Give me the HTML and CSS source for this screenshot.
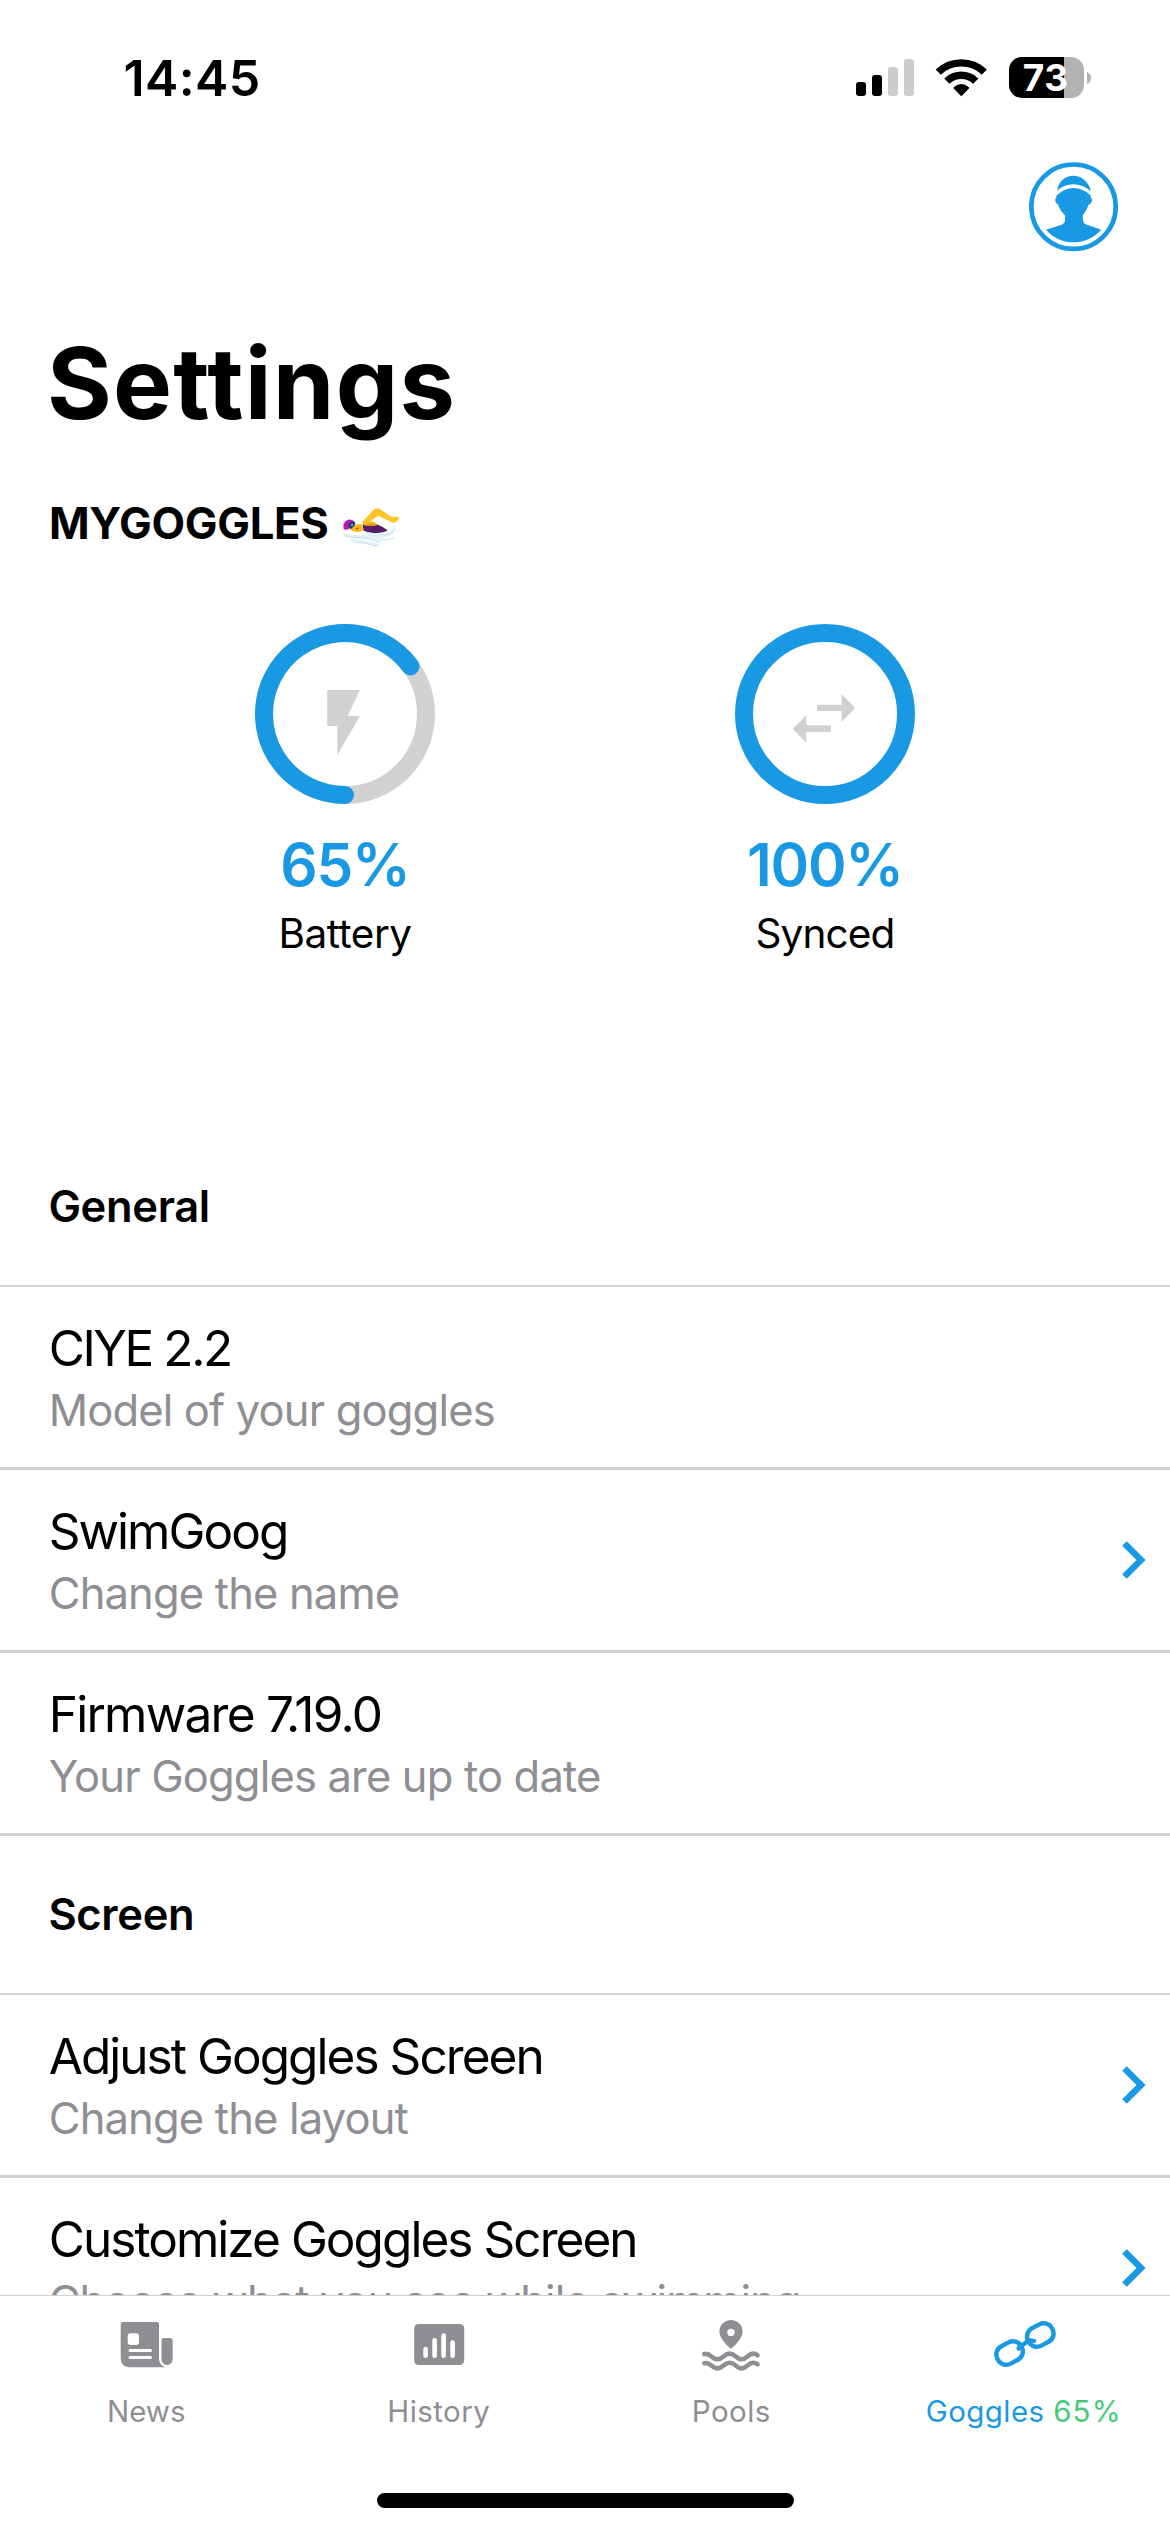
FILE: index.html
```html
<!DOCTYPE html>
<html lang="en">
<head>
<meta charset="utf-8">
<title>Settings</title>
<link rel="stylesheet" href="styles.css">
</head>
<body>
<header class="status-bar">
  <time class="clock">14:45</time>
  <div class="indicators">
    <svg class="signal" width="58" height="41" viewBox="0 0 58 41">
      <rect x="0" y="25" width="10" height="14" rx="3"/>
      <rect x="16" y="18" width="10" height="21" rx="3"/>
      <rect class="off" x="32" y="10" width="10" height="29" rx="3"/>
      <rect class="off" x="48" y="2" width="10" height="37" rx="3"/>
    </svg>
    <svg class="wifi" width="52" height="41" viewBox="0 0 52 41">
      <path class="arc" d="M3.3 15.1A33.4 33.4 0 0 1 49.3 15.1"/>
      <path class="arc" d="M11.8 24.1A21 21 0 0 1 40.8 24.1"/>
      <path d="M26.3 39.3L18.6 31.6Q18.2 30.6 19 30Q26.3 24.2 33.6 30Q34.4 30.6 34 31.6Z"/>
    </svg>
    <div class="battery"><span class="battery-level">73</span></div>
    <svg class="battery-nub" width="4" height="12" viewBox="0 0 4 12"><path d="M0 0Q4 2 4 6T0 12Z"/></svg>
  </div>
</header>

<nav class="top-bar">
  <svg class="avatar" width="90" height="90" viewBox="0 0 90 90">
    <circle class="avatar-ring" cx="44.5" cy="44.7" r="42.2"/>
    <path d="M28 28.7C30 18.5 36.5 13.7 44.4 13.7S59.5 19 62 29.3Q53.5 22.4 44.4 22.3Q35.5 22.3 28 28.7Z"/>
    <path d="M44.4 26Q35 26.2 27.3 33.7V36C25.5 36.5 26 41.3 29 42.2C30.5 47 33.5 51 36 53.4V58.7Q35.8 61.5 32.7 62.7L17 67.7C24 75.8 33.5 80.3 44.4 80.3S65 75.8 72.3 67.7L56.5 62.3Q54 61 53.8 57V53C56 50.5 58 47 59.5 42.8C63.5 41.5 63.8 37 61.8 35.5L61.5 33.3Q54 26.2 44.4 26Z"/>
  </svg>
</nav>

<main class="content">
  <h1 class="page-title">Settings</h1>
  <div class="device-name">
    <h2 class="device-label">MYGOGGLES</h2>
    <svg class="swimmer" width="60" height="50" viewBox="33 45 180 150">
      <g fill="none" stroke-linecap="round">
        <path stroke="#e4f2f8" stroke-width="9" d="M45 133C75 148 105 130 145 150M65 150C95 158 115 155 142 166M110 130C150 150 175 140 194 118"/>
        <path stroke="#c3e1ee" stroke-width="3" d="M46 138C80 150 105 135 150 158M80 156C105 158 125 164 140 169M125 128C155 140 180 135 190 124M150 148C165 152 180 150 192 143"/>
      </g>
      <path fill="#571b6b" d="M98 103L138 101Q155 108 173 121Q158 131 132 129Q110 127 99 121Z"/>
      <path fill="#f9b51c" d="M64 106L92 101L102 118Q92 128 79 126Q65 124 60 117Z"/>
      <path fill="#ffc229" d="M97 96L127 63Q138 50 151 58L184 81L200 80Q209 80 206 87Q201 97 191 99L145 77L122 92Q137 95 143 104Q124 111 102 106Z"/>
      <path fill="#e59a10" d="M101 105Q123 111 143 104Q130 99 121 99Q109 102 101 105Z"/>
      <path fill="#bd14b5" d="M41 117Q37 98 52 90Q66 85 74 97L56 117Q47 121 41 117Z"/>
      <path fill="#1d3e69" d="M57 100L73 94L76 101L72 109L61 118L55 109Z"/>
      <circle cx="66" cy="105" r="4" fill="#36a8df"/>
      <path fill="#7a3d0a" d="M79 114h6v3h-6z"/>
    </svg>
  </div>

  <section class="gauges">
    <div class="gauge">
      <svg class="ring" width="180" height="180" viewBox="0 0 180 180">
        <circle class="track" cx="90" cy="90" r="81"/>
        <path class="value" d="M90 171A81 81 0 1 1 155.5 42.4"/>
        <path class="glyph" d="M72.3 66H105L92.7 92H105L82.3 131V102H72.3Z"/>
      </svg>
      <strong class="gauge-value">65%</strong>
      <span class="gauge-label">Battery</span>
    </div>
    <div class="gauge">
      <svg class="ring" width="180" height="180" viewBox="0 0 180 180">
        <circle class="value" cx="90" cy="90" r="81"/>
        <path class="glyph" d="M82 80.7H106.7V70.3L120.3 84L106.7 97.7V87H82ZM57.7 105L71.3 91.3V101.3H96V108H71.3V118.7Z"/>
      </svg>
      <strong class="gauge-value">100%</strong>
      <span class="gauge-label synced">Synced</span>
    </div>
  </section>

  <h3 class="section-title">General</h3>
  <ul class="rows">
    <li class="row"><div class="row-text"><p class="row-title model">CIYE 2.2</p><p class="row-note">Model of your goggles</p></div></li>
    <li class="row"><div class="row-text"><p class="row-title">SwimGoog</p><p class="row-note">Change the name</p></div>
      <svg class="chevron" width="24" height="38" viewBox="0 0 24 38"><path d="M2.5 2.5L19 19L2.5 35.5"/></svg></li>
    <li class="row"><div class="row-text"><p class="row-title firmware">Firmware 7.19.0</p><p class="row-note">Your Goggles are up to date</p></div></li>
  </ul>

  <h3 class="section-title">Screen</h3>
  <ul class="rows">
    <li class="row"><div class="row-text"><p class="row-title">Adjust Goggles Screen</p><p class="row-note">Change the layout</p></div>
      <svg class="chevron" width="24" height="38" viewBox="0 0 24 38"><path d="M2.5 2.5L19 19L2.5 35.5"/></svg></li>
    <li class="row"><div class="row-text"><p class="row-title">Customize Goggles Screen</p><p class="row-note wide">Choose what you see while swimming</p></div>
      <svg class="chevron" width="24" height="38" viewBox="0 0 24 38"><path d="M2.5 2.5L19 19L2.5 35.5"/></svg></li>
  </ul>
</main>

<footer class="tab-bar">
  <div class="tabs">
    <div class="tab">
      <svg width="70" height="70" viewBox="0 0 70 70">
        <path fill-rule="evenodd" d="M11.7 12H46Q48 12 48 14V48.5Q48 55 54.5 57.3H18.5Q9.7 57 9.7 48V14Q9.7 12 11.7 12ZM19.7 23.2Q16.7 23.2 16.7 26.2V32Q16.7 35 19.7 35H25Q28 35 28 32V26.2Q28 23.2 25 23.2ZM19 39A1.5 1.5 0 0 0 19 42H39.5A1.5 1.5 0 0 0 39.5 39ZM19 45.9A1.5 1.5 0 0 0 19 48.9H39.5A1.5 1.5 0 0 0 39.5 45.9Z"/>
        <path d="M53 28H59Q61.7 28 61.7 30.7V48Q61.7 55 56.1 55Q50.5 55 50.5 48V30.7Q50.5 28 53 28Z"/>
      </svg>
      <span class="tab-label news">News</span>
    </div>
    <div class="tab">
      <svg width="70" height="70" viewBox="0 0 70 70">
        <rect x="10.2" y="14" width="50" height="41" rx="4.5"/>
        <path class="bars" d="M21.6 39V45.7M30.6 30.3V45.7M39.6 25.6V45.7M48.6 32.6V45.7"/>
      </svg>
      <span class="tab-label">History</span>
    </div>
    <div class="tab">
      <svg width="70" height="70" viewBox="0 0 70 70">
        <path fill-rule="evenodd" d="M35 10C28.5 10 23.4 15 23.4 21.6C23.4 28 30 34.5 33.6 37.7Q35 38.8 36.4 37.7C40 34.5 46.6 28 46.6 21.6C46.6 15 41.5 10 35 10ZM35 18.7A3.7 3.7 0 1 1 35 26.1A3.7 3.7 0 1 1 35 18.7Z"/>
        <path class="waves" d="M8.3 44.1C14.5 42.5 15.5 49.3 21.3 49.3S28 43.6 33.8 43.6S40 49.3 45.6 49.3S52 43.6 57 43.6Q60 43.6 61.5 45.2M8.3 53.2C14.5 51.6 15.5 58.4 21.3 58.4S28 52.7 33.8 52.7S40 58.4 45.6 58.4S52 52.7 57 52.7Q60 52.7 61.5 54.3"/>
      </svg>
      <span class="tab-label">Pools</span>
    </div>
    <div class="tab active">
      <svg width="70" height="70" viewBox="0 0 70 70">
        <g class="chain">
          <rect x="7.1" y="33.1" width="27" height="19.8" rx="9.4" transform="rotate(-28 20.6 43)"/>
          <rect x="37.8" y="15.1" width="27" height="19.8" rx="9.4" transform="rotate(-28 51.3 25)"/>
          <path d="M29.7 38.6Q29.6 36 33 35Q35.5 34.2 37.5 32T42.5 30.6L45 30.9"/>
        </g>
      </svg>
      <span class="tab-label">Goggles <b class="charge">65%</b></span>
    </div>
  </div>
  <div class="home-indicator"></div>
</footer>
</body>
</html>
```
FILE: styles.css
```css
* { box-sizing: border-box; margin: 0; padding: 0; }

:root {
  --blue: #1998e4;
  --gray: #8e8e93;
  --line: #d1d1d3;
}

body {
  display: flex;
  flex-direction: column;
  width: 1170px;
  height: 2532px;
  overflow: hidden;
  background: #fff;
  color: #000;
  font-family: Inter, "Liberation Sans", sans-serif;
}

svg { display: block; flex: none; }

/* status bar */
.status-bar {
  display: flex;
  align-items: center;
  justify-content: space-between;
  height: 155px;
  padding: 0 79px 0 123.5px;
}
.clock { font-size: 50px; font-weight: 600; letter-spacing: 0.4px; }
.indicators { display: flex; align-items: center; }
.signal .off { fill: #ccc; }
.wifi { margin-left: 21px; }
.wifi .arc { fill: none; stroke: #000; stroke-width: 7.4; }
.battery {
  width: 75px;
  height: 41px;
  margin-left: 22px;
  padding-left: 13.7px;
  border-radius: 13px;
  background: linear-gradient(to right, #000 55px, #b2b2b2 55px);
}
.battery-level {
  display: block;
  color: #fff;
  font-size: 37px;
  font-weight: 700;
  letter-spacing: 0.7px;
  line-height: 41px;
}
.battery-nub { margin-left: 3px; fill: #b2b2b2; }

/* profile button */
.top-bar {
  display: flex;
  justify-content: flex-end;
  height: 168px;
  padding: 7px 51px 0 0;
}
.avatar { fill: var(--blue); }
.avatar-ring { fill: none; stroke: var(--blue); stroke-width: 4.7; }

/* scrolling content */
.content { flex: 1; min-height: 0; overflow: hidden; }
.page-title {
  padding-left: 47px;
  font-size: 99px;
  font-weight: 700;
  letter-spacing: 1.24px;
  line-height: 120px;
}
.device-name {
  display: flex;
  align-items: center;
  gap: 12px;
  height: 60px;
  margin-top: 51px;
  padding-left: 49px;
}
.device-label { font-size: 43.6px; font-weight: 700; letter-spacing: -0.27px; line-height: 60px; }
.swimmer { margin-top: 12px; }

.gauges { display: flex; height: 574px; padding: 70px 105px 0; }
.gauge { display: flex; flex: 1; flex-direction: column; align-items: center; }
.ring { fill: none; stroke-width: 18; stroke-linecap: round; }
.ring .track { stroke: #d1d1d1; }
.ring .value { stroke: var(--blue); }
.ring .glyph { fill: #d1d1d1; stroke: none; }
.gauge-value {
  margin-top: 26px;
  color: var(--blue);
  font-size: 58.5px;
  font-weight: 600;
  letter-spacing: -1.2px;
  line-height: 70px;
}
.gauge-label { margin-top: 9px; font-size: 40.5px; letter-spacing: -0.52px; line-height: 50px; }
.gauge-label.synced { letter-spacing: -0.88px; }

.section-title {
  height: 157px;
  padding-left: 48.4px;
  font-size: 43.5px;
  font-weight: 600;
  letter-spacing: -0.35px;
  line-height: 157px;
}
.rows { border-top: 2px solid var(--line); list-style: none; }
.row {
  display: flex;
  align-items: center;
  justify-content: space-between;
  height: 183px;
  padding: 0 24px 0 48.7px;
  border-bottom: 3px solid var(--line);
}
.row-text { padding-top: 4px; }
.row-title { font-size: 49.5px; letter-spacing: -1.95px; line-height: 60px; }
.row-title.model { letter-spacing: -2.41px; }
.row-title.firmware { letter-spacing: -1.73px; }
.row-note { margin-top: 2px; color: var(--gray); font-size: 43.5px; letter-spacing: -0.83px; line-height: 60px; }
.row-note.wide { letter-spacing: -0.95px; }
.chevron { fill: none; stroke: var(--blue); stroke-width: 6.5; }

/* bottom tabs */
.tab-bar { height: 237px; border-top: 1px solid var(--line); background: #fff; }
.tabs { display: flex; height: 197px; padding-top: 14px; }
.tab {
  display: flex;
  flex: 1;
  flex-direction: column;
  align-items: center;
  gap: 11px;
  color: var(--gray);
  fill: currentColor;
}
.tab.active { color: var(--blue); }
.bars { stroke: #fff; stroke-width: 4.6; stroke-linecap: round; }
.waves { fill: none; stroke: currentColor; stroke-width: 4.6; stroke-linecap: round; }
.chain { fill: none; stroke: currentColor; stroke-width: 4.4; stroke-linecap: round; }
.tab-label { font-size: 29.5px; letter-spacing: 0.42px; line-height: 40px; white-space: nowrap; }
.tab-label.news { letter-spacing: 0; }
.charge { color: #45cb78; font-weight: 400; letter-spacing: 1.1px; }
.home-indicator { width: 417px; height: 15px; margin: 0 auto; border-radius: 8px; background: #000; }
```
